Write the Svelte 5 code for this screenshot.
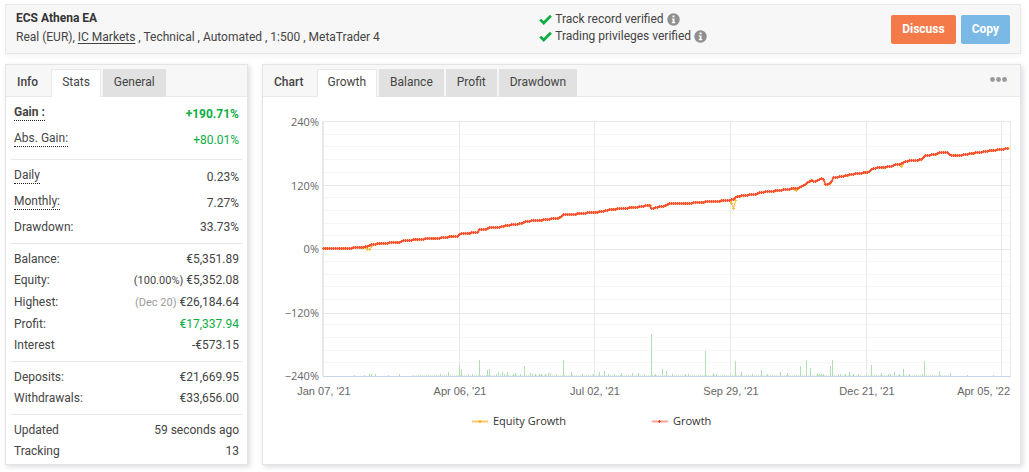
<script>
  const groups = [
    [
      { label: 'Gain :', value: '+190.71%', hint: true, positive: true, strong: true },
      { label: 'Abs. Gain:', value: '+80.01%', hint: true, positive: true }
    ],
    [
      { label: 'Daily', value: '0.23%', hint: true },
      { label: 'Monthly:', value: '7.27%', hint: true },
      { label: 'Drawdown:', value: '33.73%' }
    ],
    [
      { label: 'Balance:', value: '€5,351.89' },
      { label: 'Equity:', note: '(100.00%)', value: '€5,352.08' },
      { label: 'Highest:', note: '(Dec 20)', muted: true, value: '€26,184.64' },
      { label: 'Profit:', value: '€17,337.94', positive: true },
      { label: 'Interest', value: '-€573.15' }
    ],
    [
      { label: 'Deposits:', value: '€21,669.95' },
      { label: 'Withdrawals:', value: '€33,656.00' }
    ],
    [
      { label: 'Updated', value: '59 seconds ago' },
      { label: 'Tracking', value: '13' }
    ]
  ];

  const infoTabs = ['Stats', 'General'];
  const chartTabs = ['Growth', 'Balance', 'Profit', 'Drawdown'];
  let infoTab = $state('Stats');
  let chartTab = $state('Growth');

  // chart geometry, in viewBox units
  const LEFT = 60;
  const RIGHT = 747;
  const TOP = 25;
  const BOTTOM = 279;

  const yTicks = [
    { y: 25, text: '240%' },
    { y: 89, text: '120%' },
    { y: 152, text: '0%' },
    { y: 216, text: '−120%' },
    { y: 279, text: '−240%' }
  ];
  const minorLines = [38, 50, 63, 76, 101, 114, 127, 139, 165, 178, 190, 203, 228, 241, 254, 266];
  const xTicks = [
    { x: 60, text: "Jan 07, '21" },
    { x: 196, text: "Apr 06, '21" },
    { x: 331, text: "Jul 02, '21" },
    { x: 467, text: "Sep 29, '21" },
    { x: 603, text: "Dec 21, '21" },
    { x: 738, text: "Apr 05, '22" }
  ];

  const growth = [
    [60, 151], [87, 151], [90, 150], [100, 150], [102, 149], [105, 149], [108, 147], [111, 147],
    [113, 146], [123, 146], [125, 145], [135, 145], [139, 143], [147, 143], [150, 142], [160, 142],
    [163, 141], [175, 141], [178, 140], [184, 140], [186, 139], [194, 139], [197, 136], [205, 136],
    [207, 135], [214, 135], [216, 132], [223, 132], [226, 130], [234, 130], [238, 129], [242, 128],
    [250, 127], [258, 126], [262, 124], [273, 123], [283, 122], [291, 121], [297, 120], [300, 117],
    [309, 117], [317, 116], [330, 115], [338, 114], [348, 112], [359, 111], [371, 110], [383, 108],
    [386, 108], [388, 111], [392, 110], [399, 109], [407, 106], [422, 106], [434, 105], [449, 104],
    [463, 103], [470, 102], [473, 99], [479, 98], [491, 97], [497, 95], [505, 94], [516, 93],
    [520, 92], [534, 91], [538, 89], [541, 88], [543, 85], [547, 83], [552, 84], [555, 82],
    [559, 81], [561, 83], [562, 87], [565, 87], [568, 84], [570, 80], [579, 79], [586, 77],
    [602, 75], [606, 74], [609, 71], [617, 70], [628, 69], [633, 67], [637, 67], [641, 64],
    [649, 63], [659, 62], [661, 58], [671, 57], [677, 55], [685, 55], [687, 58], [697, 58],
    [707, 56], [722, 54], [737, 52], [745, 51]
  ];

  const equityDips = [
    [[102, 150], [104, 152], [106, 152], [108, 149]],
    [[467, 104], [468, 106], [470, 111], [472, 103]],
    [[531, 92], [533, 93], [534, 92]],
    [[637, 68], [638, 69], [639, 67]]
  ];

  // x position, height
  const bars = [
    [91, 1], [101, 1], [106, 2], [108, 2], [112, 2], [125, 1], [136, 2], [177, 2], [185, 4], [196, 10],
    [198, 7], [205, 2], [209, 2], [216, 16], [224, 6], [226, 7], [233, 2], [235, 4], [239, 4], [241, 2],
    [244, 4], [250, 2], [252, 3], [257, 2], [261, 10], [267, 3], [269, 2], [272, 2], [276, 2], [278, 2],
    [282, 2], [285, 3], [287, 3], [293, 2], [300, 16], [308, 4], [319, 2], [330, 2], [336, 4], [341, 5],
    [345, 2], [351, 2], [358, 3], [369, 3], [375, 3], [381, 2], [388, 42], [392, 2], [399, 7], [403, 5],
    [409, 2], [422, 2], [425, 2], [442, 25], [450, 3], [453, 2], [472, 15], [478, 4], [489, 2], [498, 6],
    [504, 2], [517, 4], [524, 3], [537, 10], [543, 16], [547, 8], [554, 3], [556, 2], [558, 2], [560, 2],
    [567, 10], [569, 16], [575, 2], [577, 2], [582, 2], [586, 4], [590, 2], [595, 2], [608, 11], [618, 3],
    [625, 2], [627, 2], [631, 4], [636, 2], [640, 7], [646, 2], [659, 2], [661, 15], [676, 5], [687, 3],
    [704, 1], [730, 1]
  ];

  const valueAt = (x) => {
    const i = growth.findIndex((p) => p[0] >= x);
    if (i <= 0) return growth[0][1];
    const [x0, y0] = growth[i - 1];
    const [x1, y1] = growth[i];
    return Math.round(y0 + ((y1 - y0) * (x - x0)) / (x1 - x0));
  };

  const days = [];
  for (let x = LEFT; x <= 745; x += 2) days.push([x, valueAt(x)]);

  const line = (points) => 'M' + points.map(([x, y]) => `${x + 0.5} ${y + 0.5}`).join('L');
  const marks = (points) => points.map(([x, y]) => `M${x - 1} ${y + 0.5}h3M${x + 0.5} ${y - 1}v3`).join('');

  const barPath = bars.map(([x, h]) => `M${x + 0.5} ${BOTTOM}v-${h}`).join('');
  let lowBars = '';
  for (let x = 149; x < 686; x += 2) lowBars += `M${x + 0.5} ${BOTTOM}v-1`;
</script>

{#snippet check()}
  <svg class="check" width="13" height="11" viewBox="0 0 13 11" aria-hidden="true">
    <path d="M1.2 5.6 4.7 9 11.9 1.8" fill="none" stroke="#0cae44" stroke-width="2.7" />
  </svg>
{/snippet}

{#snippet info()}
  <svg class="info" width="13" height="13" viewBox="0 0 13 13" aria-hidden="true">
    <circle cx="6.5" cy="6.5" r="6.2" fill="#8f8f8f" />
    <path d="M5.5 2.5h2v1.8h-2zM4.8 5.4h2.7v3.7h.8v1.2H4.8V9.1h.8V6.6h-.8z" fill="#fff" />
  </svg>
{/snippet}

<main>
  <header class="box account">
    <div class="name">
      <h1>ECS Athena EA</h1>
      <p>Real (EUR), <a href="#broker">IC Markets</a> , Technical , Automated , 1:500 , MetaTrader 4</p>
    </div>
    <div class="side">
      <ul>
        <li>{@render check()}Track record verified{@render info()}</li>
        <li>{@render check()}Trading privileges verified{@render info()}</li>
      </ul>
      <div class="actions">
        <button class="discuss">Discuss</button>
        <button class="copy">Copy</button>
      </div>
    </div>
  </header>

  <div class="columns">
    <section class="box panel stats">
      <div class="bar">
        <h2>Info</h2>
        <div class="tabs" role="tablist">
          {#each infoTabs as tab}
            <button role="tab" aria-selected={infoTab === tab} class:active={infoTab === tab} onclick={() => (infoTab = tab)}>{tab}</button>
          {/each}
        </div>
      </div>
      {#each groups as rows}
        <dl>
          {#each rows as row}
            <div class="row" class:tall={row.hint} class:strong={row.strong} class:dated={row.muted}>
              <dt><span class:hint={row.hint}>{row.label}</span></dt>
              <dd class:positive={row.positive}>
                {#if row.note}<small class:muted={row.muted}>{row.note}</small>{/if}
                {row.value}
              </dd>
            </div>
          {/each}
        </dl>
      {/each}
    </section>

    <section class="box panel chart">
      <div class="bar">
        <h2>Chart</h2>
        <div class="tabs" role="tablist">
          {#each chartTabs as tab}
            <button role="tab" aria-selected={chartTab === tab} class:active={chartTab === tab} onclick={() => (chartTab = tab)}>{tab}</button>
          {/each}
        </div>
        <button class="more" aria-label="More options">
          <svg width="17" height="5" viewBox="0 0 17 5" fill="#999">
            <circle cx="2.5" cy="2.5" r="2.4" />
            <circle cx="8.5" cy="2.5" r="2.4" />
            <circle cx="14.5" cy="2.5" r="2.4" />
          </svg>
        </button>
      </div>

      <svg class="plot" viewBox="0 0 757 366" role="img" aria-label="Growth chart">
        {#each minorLines as y}
          <path d="M{LEFT} {y - 0.5}H{RIGHT}" stroke="#f6f6f6" />
        {/each}
        {#each yTicks as tick}
          <path d="M{LEFT} {tick.y + (tick.y > 150 ? 0.5 : -0.5)}H{RIGHT}" stroke="#e8e8e8" />
          <text class="y-label" x="56" y={tick.y + 4} text-anchor="end">{tick.text}</text>
        {/each}
        {#each xTicks as tick, i}
          {#if i > 0}
            <path d="M{tick.x + 0.5} {TOP}V{BOTTOM}" stroke="#e8e8e8" />
          {/if}
          {#if i === xTicks.length - 1}
            <text class="x-label" x={RIGHT} y="298" text-anchor="end">{tick.text}</text>
          {:else}
            <text class="x-label" x={tick.x + 1} y="298" text-anchor="middle">{tick.text}</text>
          {/if}
        {/each}
        <path d="M{LEFT} {TOP - 1}V{BOTTOM}" stroke="#e8e8e8" stroke-width="2" />
        <path d="M{RIGHT + 0.5} {TOP - 1}V{BOTTOM}" stroke="#e8e8e8" />

        <path d={lowBars} stroke="#d3ecd3" />
        <path d={barPath} stroke="#b0dfb2" />
        <path d="M{LEFT} {BOTTOM + 0.5}H{RIGHT + 1}" stroke="#c6d5ea" />

        <g fill="none" stroke="#fdbb3c">
          <path d={line(days)} stroke-width="3" stroke-opacity="0.35" />
          <path d={marks(days.filter((_, i) => i % 9 < 2))} transform="translate(1 0)" />
          {#each equityDips as dip}
            <path d={line(dip)} />
            <path d={marks(dip)} />
          {/each}
        </g>
        <g fill="none" stroke="#f9503a">
          <path d={line(days)} stroke-width="1.5" />
          <path d={marks(days)} />
        </g>

        <path d="M209 324.5h16" stroke="#fdc872" stroke-width="2" />
        <circle cx="217" cy="324.5" r="1.6" fill="#fdb52a" />
        <text class="legend" x="230" y="328">Equity Growth</text>
        <path d="M389 324.5h16" stroke="#f9a294" stroke-width="2" />
        <path d="M395 324.5h3M396.5 323v3" fill="none" stroke="#ee3b2a" />
        <text class="legend" x="410" y="328">Growth</text>
      </svg>
    </section>
  </div>
</main>

<style>
  :global(body) {
    margin: 0;
    background: #fff;
  }

  main {
    padding: 4px 8px 8px 5px;
    font: 12px/17px Roboto, sans-serif;
    color: #444;
  }

  h1,
  h2,
  p,
  ul,
  dl,
  dd {
    margin: 0;
    padding: 0;
  }

  button {
    padding: 0;
    border: 0;
    font: inherit;
    color: inherit;
    cursor: pointer;
  }

  .box {
    border: 1px solid #e4e4e4;
    box-shadow: 2px 2px 5px rgba(60, 60, 100, 0.18);
  }

  .account {
    display: grid;
    grid-template-columns: 10fr 9fr;
    align-items: center;
    height: 48px;
    padding: 0 10px;
    background: #f7f7f7;
    border-color: #e9e9e9;
    box-shadow: 1px 2px 5px rgba(60, 60, 100, 0.06);
  }

  .name,
  ul {
    padding-bottom: 2px;
  }

  h1 {
    font-size: 12px;
    line-height: 19px;
    font-weight: 700;
    color: #333;
  }

  .account p {
    line-height: 19px;
  }

  .account a {
    color: inherit;
    text-underline-offset: 2px;
  }

  .side {
    display: flex;
    align-items: center;
    justify-content: space-between;
  }

  ul {
    list-style: none;
  }

  li {
    display: flex;
    align-items: center;
  }

  .check {
    margin-right: 3px;
  }

  .info {
    margin-left: 3px;
  }

  .actions {
    display: flex;
    gap: 5px;
  }

  .actions button {
    height: 29px;
    padding: 0 11px;
    border-radius: 2px;
    font-weight: 700;
    color: #fff;
  }

  .actions .discuss {
    background: #f47a4a;
  }

  .actions .copy {
    background: #7ab9e6;
  }

  .columns {
    display: flex;
    gap: 14px;
    margin-top: 10px;
  }

  .panel {
    background: #fff;
  }

  .stats {
    flex: 0 0 241px;
  }

  .chart {
    flex: 1;
    min-width: 0;
  }

  .bar {
    display: flex;
    align-items: flex-end;
    height: 31px;
    border-bottom: 1px solid #e9e9e9;
    background: #f7f7f7;
  }

  h2 {
    padding: 0 13px 0 11px;
    font-size: 12px;
    line-height: 28px;
    font-weight: 500;
  }

  .tabs {
    display: flex;
    gap: 2px;
    margin-bottom: -1px;
  }

  .tabs button {
    height: 28px;
    padding: 0 11px 2px;
    background: #e1e1e1;
  }

  .tabs .active {
    padding: 0 10px 2px;
    border: 1px solid #e9e9e9;
    border-bottom: 0;
    background: #fff;
  }

  .more {
    align-self: center;
    display: flex;
    margin-left: auto;
    padding: 5px 13px 8px;
    background: none;
  }

  dl {
    margin: 0 5px;
    padding: 5px 3px;
    border-bottom: 1px solid #e9e9e9;
  }

  dl:last-child {
    padding-bottom: 2px;
    border-bottom: 0;
  }

  .row {
    display: flex;
    justify-content: space-between;
    line-height: 21px;
  }

  .row.tall {
    height: 26px;
    line-height: 25px;
  }

  .tall dt {
    line-height: 20px;
  }

  .row.dated {
    line-height: 22px;
  }

  .strong {
    font-weight: 700;
  }

  .hint {
    padding-bottom: 1px;
    border-bottom: 1px dotted #222;
  }

  small {
    font-size: 11px;
  }

  .muted {
    color: #999;
  }

  .positive {
    color: #0cae44;
  }

  .plot {
    display: block;
    width: 100%;
    height: auto;
  }

  .y-label,
  .legend {
    font: 11px 'Open Sans', sans-serif;
    fill: #666;
  }

  .legend {
    fill: #333;
  }

  .x-label {
    font: 11px 'Liberation Sans', Arial, sans-serif;
    fill: #666;
  }
</style>
